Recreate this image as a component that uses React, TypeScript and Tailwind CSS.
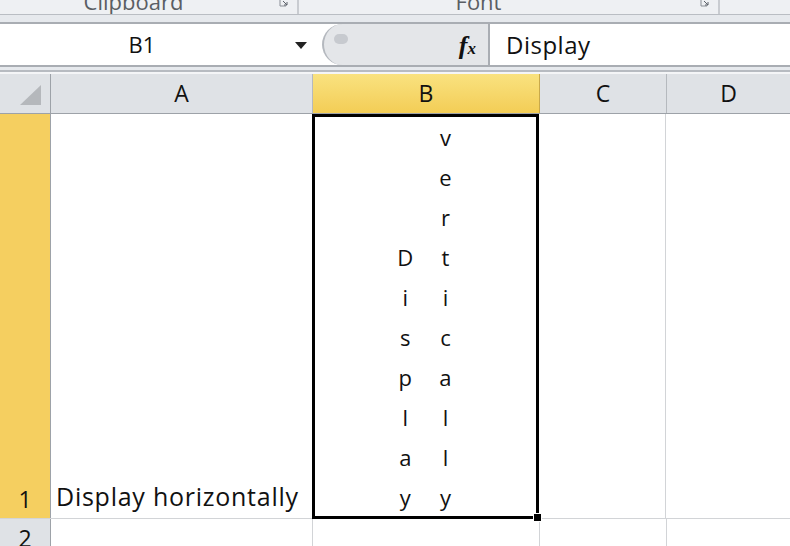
import React from 'react';

const font = { fontFamily: '"Open Sans", "Liberation Sans", sans-serif' };

const left = ['D', 'i', 's', 'p', 'l', 'a', 'y'];
const right = ['v', 'e', 'r', 't', 'i', 'c', 'a', 'l', 'l', 'y'];

function Launcher() {
  return (
    <svg width="10" height="8" viewBox="0 0 10 8" className="absolute right-[8px] top-0">
      <path d="M1 0v6h6" fill="none" stroke="#8a8f96" strokeWidth="1" />
      <path d="M4 1l4 4M8 2v3H5" fill="none" stroke="#5b6068" strokeWidth="1" />
    </svg>
  );
}

export default function App() {
  return (
    <div className="w-[790px] h-[546px] overflow-hidden bg-[#e6e9ed] text-[#111]" style={font}>
      {/* ribbon group labels, cut off */}
      <div className="h-[15px] flex bg-[#eef0f3] border-b border-[#b9bdc3] overflow-hidden">
        <div className="relative w-[299px] border-r-2 border-[#c9ccd1] flex justify-center">
          <span className="text-[22px] leading-none -mt-[10px] text-[#5a5e64] mr-[30px]">Clipboard</span>
          <Launcher />
        </div>
        <div className="relative w-[421px] border-r-2 border-[#c9ccd1] flex justify-center">
          <span className="text-[22px] leading-none -mt-[10px] text-[#5a5e64] mr-[60px]">Font</span>
          <Launcher />
        </div>
        <div className="flex-1" />
      </div>
      <div className="h-[7px]" />

      {/* formula bar */}
      <div className="h-[45px] flex border-y-2 border-[#a9adb3] bg-white">
        <div className="w-[322px] relative flex items-center">
          <span className="w-[284px] text-center text-[22px]">B1</span>
          <svg width="12" height="8" viewBox="0 0 12 8" className="absolute left-[295px] top-[18px]">
            <path d="M0 0h12L6 7z" fill="#222" />
          </svg>
        </div>
        <div className="w-[168px] relative bg-[#e4e6e9] rounded-l-[22px] border-l-2 border-[#b4b8be] border-r-2 border-r-[#a9adb3]">
          <div className="absolute left-[10px] top-[10px] w-[14px] h-[10px] rounded-full bg-[#c7cacf]" />
          <span className="absolute right-[12px] top-[2px] text-[26px] italic font-bold" style={{ fontFamily: '"Liberation Serif", serif' }}>
            f<span className="text-[17px]">x</span>
          </span>
        </div>
        <div className="flex-1 flex items-center pl-[16px] text-[24px] tracking-[0.5px]">Display</div>
      </div>
      <div className="h-[3px]" />
      <div className="h-[2px] bg-[#b7bbc1]" />
      <div className="h-[2px] bg-[#f4f5f7]" />

      {/* grid */}
      <div className="bg-white">
        <div className="h-[40px] flex text-[23px] border-b border-[#9da2a8]">
          <div className="w-[51px] bg-[#dfe2e6] border-r border-[#9da2a8] relative">
            <svg width="22" height="22" viewBox="0 0 22 22" className="absolute left-[20px] top-[11px]">
              <path d="M21 0V20H0z" fill="#b5b8bc" />
            </svg>
          </div>
          <div className="w-[262px] bg-[#dfe2e6] border-r border-[#b5b9be] flex items-center justify-center">A</div>
          <div className="w-[227px] bg-gradient-to-b from-[#f9e27f] to-[#f3cd55] border-r border-[#c9a94a] flex items-center justify-center">B</div>
          <div className="w-[127px] bg-[#dfe2e6] border-r border-[#b5b9be] flex items-center justify-center">C</div>
          <div className="flex-1 bg-[#dfe2e6] flex items-center justify-center">D</div>
        </div>

        <div className="h-[405px] flex border-b border-[#d2d4d7]">
          <div className="w-[51px] bg-[#f5cf60] border-r border-[#9da2a8] flex items-end justify-center pb-[2px] text-[23px]">1</div>
          <div className="w-[262px] flex items-end pl-[5px] pb-[3px] text-[25px] tracking-[0.75px] whitespace-nowrap overflow-visible">
            Display horizontally
          </div>
          <div className="w-[227px] relative border-[3px] border-black -ml-[1px] -mb-[1px] flex justify-center gap-[26px] text-[22px] leading-none pr-[2px]">
            <div className="flex flex-col items-center justify-end gap-[20px] pb-[10px]">
              {left.map((c, i) => (
                <span key={i} className="h-[20px]">{c}</span>
              ))}
            </div>
            <div className="flex flex-col items-center justify-end gap-[20px] pb-[10px]">
              {right.map((c, i) => (
                <span key={i} className="h-[20px]">{c}</span>
              ))}
            </div>
            <div className="absolute -right-[6px] -bottom-[6px] w-[9px] h-[9px] bg-black border border-white" />
          </div>
          <div className="w-[127px] border-r border-[#d2d4d7]" />
          <div className="flex-1" />
        </div>

        <div className="h-[40px] flex">
          <div className="w-[51px] bg-[#dfe2e6] border-r border-[#9da2a8] flex justify-center pt-[2px] text-[23px]">2</div>
          <div className="w-[262px] border-r border-[#d2d4d7]" />
          <div className="w-[227px] border-r border-[#d2d4d7]" />
          <div className="w-[127px] border-r border-[#d2d4d7]" />
          <div className="flex-1" />
        </div>
      </div>
    </div>
  );
}
